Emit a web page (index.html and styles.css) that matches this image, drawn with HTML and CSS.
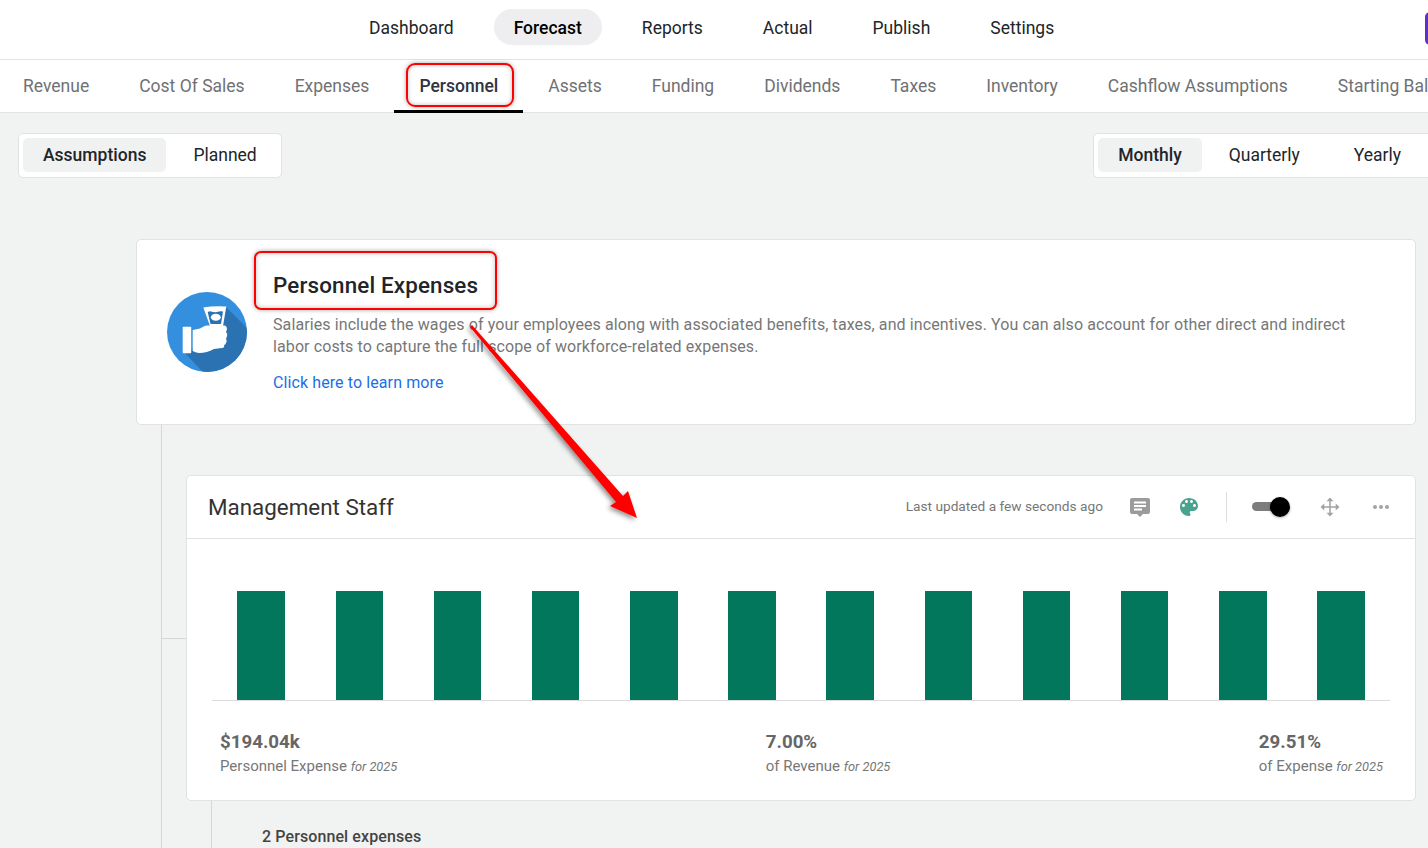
FILE: index.html
```html
<!DOCTYPE html>
<html lang="en">
<head>
<meta charset="utf-8">
<title>Personnel Expenses</title>
<link rel="stylesheet" href="styles.css">
</head>
<body>
<div class="page">
  <nav class="topnav">
    <a class="topnav-item">Dashboard</a>
    <a class="topnav-item is-active">Forecast</a>
    <a class="topnav-item">Reports</a>
    <a class="topnav-item">Actual</a>
    <a class="topnav-item">Publish</a>
    <a class="topnav-item">Settings</a>
    <span class="upgrade"></span>
  </nav>
  <nav class="subnav">
    <a class="subnav-item">Revenue</a>
    <a class="subnav-item">Cost Of Sales</a>
    <a class="subnav-item">Expenses</a>
    <a class="subnav-item is-current">Personnel<span class="callout-tab"></span></a>
    <a class="subnav-item">Assets</a>
    <a class="subnav-item">Funding</a>
    <a class="subnav-item">Dividends</a>
    <a class="subnav-item">Taxes</a>
    <a class="subnav-item">Inventory</a>
    <a class="subnav-item">Cashflow Assumptions</a>
    <a class="subnav-item">Starting Balances</a>
  </nav>
  <div class="toolbar">
    <div class="segment">
      <span class="segment-item is-on">Assumptions</span>
      <span class="segment-item">Planned</span>
    </div>
    <div class="segment segment-period">
      <span class="segment-item is-on">Monthly</span>
      <span class="segment-item">Quarterly</span>
      <span class="segment-item">Yearly</span>
    </div>
  </div>

  <section class="intro">
    <svg class="intro-icon" viewBox="0 0 80 80" width="80" height="80" aria-hidden="true">
      <defs><clipPath id="disc"><circle cx="40" cy="40" r="40"/></clipPath></defs>
      <circle cx="40" cy="40" r="40" fill="#348fdf"/>
      <polygon clip-path="url(#disc)" points="59,15 90,46 90,90 45,90 18,61 50,40" fill="#2b72b2"/>
      <rect x="15.700" y="34.700" width="8.500" height="26.600" rx=".8" fill="#fff"/>
      <path d="M25.700,38 L33,36.500 C36,35 38,33 41,33.500 L58,33.500 Q60,34 60,37 Q59.500,39 59,40 Q61,42 60,44 Q59.500,46 59,47 Q60.500,49 59,51 Q58.500,53 57,53 Q58,55.500 55,56 L47,57 Q40,61 32,61 Q28,60.500 25.700,59 Z" fill="#fff"/>
      <path d="M36.300,15.500 Q47,13.500 59.300,14.500 L56,34 L43,34 Z" fill="#fff"/>
      <path d="M40.700,20 Q43,19 44,19.500 Q48,21 52,19.500 Q54,19 56,19.500 L54,32 L43.500,32 Z" fill="#2b72b2"/>
      <ellipse cx="48.800" cy="25.300" rx="5" ry="3.500" fill="#fff"/>
    </svg>
    <div class="intro-body">
      <h1 class="intro-title">Personnel Expenses</h1>
      <p class="intro-text">Salaries include the wages of your employees along with associated benefits, taxes, and incentives. You can also account for other direct and indirect labor costs to capture the full scope of workforce-related expenses.</p>
      <a class="intro-link">Click here to learn more</a>
    </div>
  </section>

  <div class="tree">
    <section class="card">
      <header class="card-head">
        <h2 class="card-title">Management Staff</h2>
        <div class="card-tools">
          <span class="updated">Last updated a few seconds ago</span>
          <svg class="tool" viewBox="0 0 24 24" width="24" height="24" aria-hidden="true">
            <path d="M4 3h16a2 2 0 0 1 2 2v12a2 2 0 0 1-2 2h-5l-3 3-3-3H4a2 2 0 0 1-2-2V5a2 2 0 0 1 2-2z" fill="#9b9b9b"/>
            <path d="M6 6.5h12v2H6zM6 10h12v2H6zM6 13.500h8v2H6z" fill="#fff"/>
          </svg>
          <svg class="tool" viewBox="0 0 24 24" width="24" height="24" aria-hidden="true">
            <path d="M12 3c-4.970 0-9 4.030-9 9s4.030 9 9 9c.83 0 1.500-.67 1.500-1.500 0-.39-.15-.74-.39-1.010-.23-.26-.38-.61-.38-.99 0-.83.67-1.500 1.500-1.500H16c2.760 0 5-2.240 5-5 0-4.420-4.030-8-9-8zm-5.500 9c-.83 0-1.500-.67-1.500-1.500S5.670 9 6.500 9 8 9.670 8 10.500 7.330 12 6.500 12zm3-4C8.670 8 8 7.330 8 6.500S8.670 5 9.500 5s1.500.67 1.500 1.500S10.330 8 9.500 8zm5 0c-.83 0-1.500-.67-1.500-1.500S13.670 5 14.500 5s1.500.67 1.500 1.500S15.330 8 14.500 8zm3 4c-.83 0-1.500-.67-1.500-1.500S16.670 9 17.500 9s1.500.67 1.500 1.500-.67 1.500-1.500 1.500z" fill="#4aa38f"/>
          </svg>
          <span class="divider"></span>
          <span class="toggle"><span class="toggle-track"></span><span class="toggle-thumb"></span></span>
          <svg class="tool" viewBox="0 0 24 24" width="24" height="24" aria-hidden="true">
            <path d="M12 5v14M5 12h14" stroke="#a3a3a3" stroke-width="1.500" fill="none"/>
            <path d="M12 2.500l3.500 3.800h-7zM12 21.500l3.500-3.800h-7zM2.500 12l3.800-3.500v7zM21.500 12l-3.800-3.500v7z" fill="#a3a3a3"/>
          </svg>
          <svg class="tool tool-dots" viewBox="0 0 28 24" width="28" height="24" aria-hidden="true">
            <circle cx="8" cy="12" r="2" fill="#a3a3a3"/>
            <circle cx="14" cy="12" r="2" fill="#a3a3a3"/>
            <circle cx="20" cy="12" r="2" fill="#a3a3a3"/>
          </svg>
        </div>
      </header>
      <div class="chart">
        <span class="slot"><i class="bar"></i></span>
        <span class="slot"><i class="bar"></i></span>
        <span class="slot"><i class="bar"></i></span>
        <span class="slot"><i class="bar"></i></span>
        <span class="slot"><i class="bar"></i></span>
        <span class="slot"><i class="bar"></i></span>
        <span class="slot"><i class="bar"></i></span>
        <span class="slot"><i class="bar"></i></span>
        <span class="slot"><i class="bar"></i></span>
        <span class="slot"><i class="bar"></i></span>
        <span class="slot"><i class="bar"></i></span>
        <span class="slot"><i class="bar"></i></span>
      </div>
      <div class="stats">
        <div class="stat"><strong class="stat-value">$194.04k</strong><span class="stat-label">Personnel Expense <em>for 2025</em></span></div>
        <div class="stat"><strong class="stat-value">7.00%</strong><span class="stat-label">of Revenue <em>for 2025</em></span></div>
        <div class="stat"><strong class="stat-value">29.51%</strong><span class="stat-label">of Expense <em>for 2025</em></span></div>
      </div>
    </section>
    <div class="subtree">
      <h3 class="subtree-title">2 Personnel expenses</h3>
    </div>
  </div>

  <svg class="arrow" viewBox="0 0 1428 848" width="1428" height="848" aria-hidden="true">
    <defs>
      <filter id="arrow-shadow" x="-20%" y="-20%" width="140%" height="140%">
        <feDropShadow dx="-2" dy="2" stdDeviation="2.500" flood-color="#000" flood-opacity=".45"/>
      </filter>
    </defs>
    <polygon filter="url(#arrow-shadow)" points="470,327 472,325 623,496 628,491 637,518 610,506 616,502" fill="#f00"/>
  </svg>
</div>
</body>
</html>
```

FILE: styles.css
```css
* { box-sizing: border-box; }

html, body { margin: 0; padding: 0; }

body {
  background: #f1f3f3;
  font-family: Roboto, "Liberation Sans", sans-serif;
  color: #212529;
}

.page {
  position: relative;
  width: 1428px;
  height: 848px;
  overflow: hidden;
}

.topnav {
  display: flex;
  align-items: center;
  gap: 20px;
  height: 60px;
  padding: 0 0 5px 349px;
  background: #fff;
  border-bottom: 1px solid #e2e2e2;
}

.topnav-item {
  padding: 8px 20px 6px;
  font-size: 17.5px;
  line-height: 22px;
  color: #212529;
  border-radius: 18px;
  white-space: nowrap;
}

.topnav-item.is-active {
  background: #eeeef1;
  font-weight: 500;
  color: #000;
}

.upgrade {
  flex: none;
  width: 60px;
  height: 33px;
  margin: 3px -57px 0 auto;
  background: #5f2fc8;
  border-radius: 5px;
}

.subnav {
  display: flex;
  height: 53px;
  padding-left: 0;
  margin-left: -2px;
  background: #fff;
  border-bottom: 1px solid #e2e2e2;
  white-space: nowrap;
}

.subnav-item {
  position: relative;
  flex: none;
  height: 53px;
  padding: 0 25px;
  font-size: 17.5px;
  line-height: 52px;
  color: #6f7175;
}

.subnav-item.is-current {
  color: #2f3342;
  font-weight: 500;
  border-bottom: 3px solid #000;
}

.callout-tab {
  position: absolute;
  left: 12px;
  top: 3px;
  width: 108px;
  height: 44px;
  border: 2px solid #f00;
  border-radius: 9px;
  box-shadow: 0 0 4px rgba(0, 0, 0, .35), inset 0 0 4px rgba(0, 0, 0, .25);
}

.toolbar {
  display: flex;
  justify-content: space-between;
  align-items: flex-start;
  padding: 20px 0 0 18px;
}

.segment {
  display: flex;
  height: 45px;
  padding: 4px;
  background: #fff;
  border: 1px solid #e2e2e2;
  border-radius: 5px;
}

.segment-item {
  padding: 0 20px;
  font-size: 17.5px;
  line-height: 34px;
  height: 34px;
  margin-right: 7px;
  border-radius: 5px;
  white-space: nowrap;
}

.segment-item.is-on {
  background: #f0f1f1;
  font-weight: 500;
}

.segment-item:last-child { margin-right: 0; }

.segment-period {
  margin-right: -13px;
  border-radius: 5px 0 0 5px;
  border-right: 0;
  padding-right: 20px;
}

.segment-period .segment-item:nth-child(2) { margin-right: 14px; }

.intro {
  display: flex;
  align-items: flex-start;
  width: 1280px;
  height: 186px;
  margin: 61px 0 0 136px;
  padding: 52px 60px 0 30px;
  background: #fff;
  border: 1px solid #e2e2e2;
  border-radius: 5px;
}

.intro-icon {
  flex: none;
  margin-right: 26px;
}

.intro-body {
  flex: 1;
  margin-top: -41px;
}

.intro-title {
  width: 243px;
  height: 59px;
  margin: 0 0 0 -19px;
  padding-left: 17px;
  font-size: 22.4px;
  font-weight: 500;
  letter-spacing: .15px;
  line-height: 65px;
  color: #212529;
  border: 2px solid #f00;
  border-radius: 7px;
  box-shadow: 0 0 4px rgba(0, 0, 0, .35), inset 0 0 5px rgba(0, 0, 0, .25);
  white-space: nowrap;
}

.intro-text {
  margin: 4px 0 0;
  font-size: 16px;
  letter-spacing: .1px;
  line-height: 22px;
  color: #777;
}

.intro-link {
  display: block;
  margin-top: 14px;
  font-size: 16px;
  letter-spacing: .1px;
  line-height: 22px;
  color: #1a6fe8;
}

.tree {
  margin-left: 161px;
  padding: 50px 0 0 24px;
  border-left: 1px solid #d6d6d6;
  height: 423px;
}

.card {
  position: relative;
  width: 1230px;
  height: 326px;
  background: #fff;
  border: 1px solid #e2e2e2;
  border-radius: 5px;
}

.card::before {
  content: "";
  position: absolute;
  left: -25px;
  top: 162px;
  width: 24px;
  height: 1px;
  background: #d6d6d6;
}

.card-head {
  display: flex;
  justify-content: space-between;
  align-items: center;
  height: 63px;
  padding: 0 20px 0 21px;
  border-bottom: 1px solid #e2e2e2;
}

.card-title {
  margin: 0 0 1px;
  font-size: 22.4px;
  font-weight: 400;
  color: #333;
}

.card-tools {
  display: flex;
  align-items: center;
  gap: 25px;
}

.updated {
  margin-bottom: 2px;
  font-size: 13.7px;
  color: #777;
}

.tool { flex: none; display: block; }

.divider {
  width: 1px;
  height: 30px;
  background: #ddd;
}

.toggle {
  position: relative;
  display: block;
  width: 41px;
  height: 24px;
}

.toggle-track {
  position: absolute;
  left: 0;
  top: 7px;
  width: 25px;
  height: 9px;
  background: #7d7d7d;
  border-radius: 5px;
}

.toggle-thumb {
  position: absolute;
  left: 18px;
  top: 2px;
  width: 20px;
  height: 20px;
  background: #000;
  border-radius: 50%;
  box-shadow: 0 1px 3px rgba(0, 0, 0, .3);
}

.chart {
  display: flex;
  align-items: flex-end;
  height: 162px;
  margin: 0 25px;
  border-bottom: 1px solid #dcdcdc;
}

.slot {
  flex: 1;
  display: flex;
  justify-content: center;
}

.bar {
  display: block;
  width: 47.500px;
  height: 109px;
  background: #02775b;
}

.stats {
  display: flex;
  justify-content: space-between;
  padding: 29px 32px 0 33px;
}

.stat {
  display: flex;
  flex-direction: column;
}

.stat-value {
  font-size: 18.72px;
  font-weight: 700;
  line-height: 24px;
  color: #666;
}

.stat-label {
  margin-top: 2px;
  font-size: 15px;
  line-height: 20px;
  color: #777;
  white-space: nowrap;
}

.stat-label em {
  font-size: 12.8px;
}

.subtree {
  margin-left: 25px;
  height: 60px;
  padding: 26px 0 0 50px;
  border-left: 1px solid #d6d6d6;
}

.subtree-title {
  margin: 0;
  font-size: 16px;
  font-weight: 500;
  letter-spacing: .1px;
  line-height: 20px;
  color: #444;
}

.arrow {
  position: absolute;
  left: 0;
  top: 0;
  pointer-events: none;
}
```
